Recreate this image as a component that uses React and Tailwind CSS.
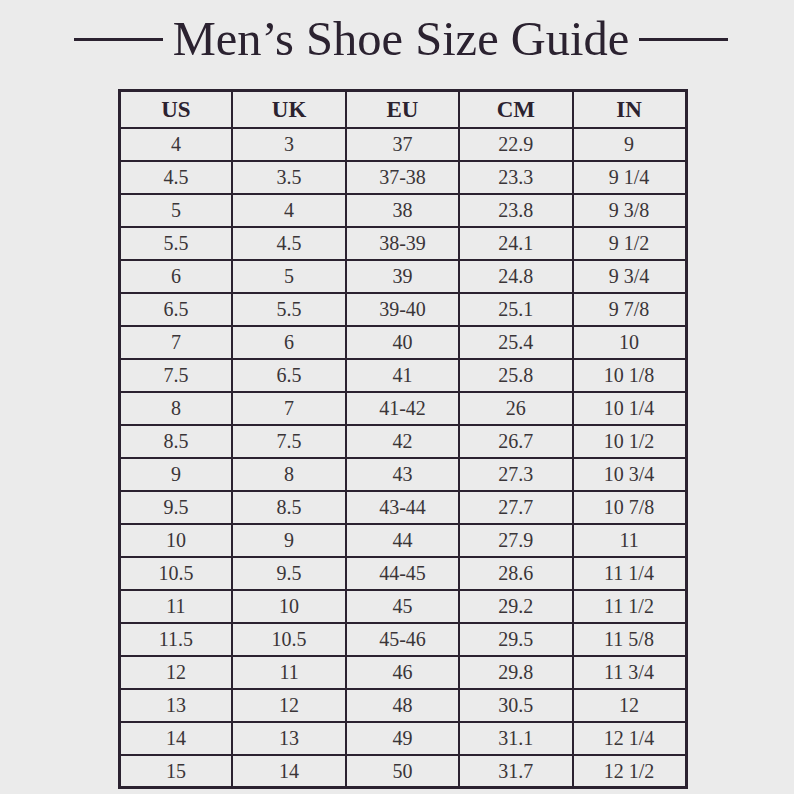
const rows = [
  ["4", "3", "37", "22.9", "9"],
  ["4.5", "3.5", "37-38", "23.3", "9 1/4"],
  ["5", "4", "38", "23.8", "9 3/8"],
  ["5.5", "4.5", "38-39", "24.1", "9 1/2"],
  ["6", "5", "39", "24.8", "9 3/4"],
  ["6.5", "5.5", "39-40", "25.1", "9 7/8"],
  ["7", "6", "40", "25.4", "10"],
  ["7.5", "6.5", "41", "25.8", "10 1/8"],
  ["8", "7", "41-42", "26", "10 1/4"],
  ["8.5", "7.5", "42", "26.7", "10 1/2"],
  ["9", "8", "43", "27.3", "10 3/4"],
  ["9.5", "8.5", "43-44", "27.7", "10 7/8"],
  ["10", "9", "44", "27.9", "11"],
  ["10.5", "9.5", "44-45", "28.6", "11 1/4"],
  ["11", "10", "45", "29.2", "11 1/2"],
  ["11.5", "10.5", "45-46", "29.5", "11 5/8"],
  ["12", "11", "46", "29.8", "11 3/4"],
  ["13", "12", "48", "30.5", "12"],
  ["14", "13", "49", "31.1", "12 1/4"],
  ["15", "14", "50", "31.7", "12 1/2"],
];

const headers = ["US", "UK", "EU", "CM", "IN"];

export default function App() {
  return (
    <div className="w-[794px] h-[794px] bg-[#ebebeb] [font-family:'Liberation_Serif','Times_New_Roman',serif] overflow-hidden">
      {/* title with rules either side */}
      <div className="flex items-center justify-center gap-[10px] pt-[6px] pl-[8px] h-[72px]">
        <div className="w-[89px] h-[3px] bg-[#2b2230]" />
        <h1 className="text-[48.5px] leading-none text-[#2b2230]">Men’s Shoe Size Guide</h1>
        <div className="w-[89px] h-[3px] bg-[#2b2230]" />
      </div>
      <div className="flex justify-center mt-[17px] pl-[11px]">
        <table className="w-[570px] table-fixed border-collapse border-[3px] border-[#2b2230] text-[#3a3538]">
          <thead>
            <tr className="h-[37px]">
              {headers.map((h) => (
                <th
                  key={h}
                  className="border-2 border-[#2b2230] text-[23px] font-bold text-[#2b2230] leading-none p-0 text-center"
                >
                  {h}
                </th>
              ))}
            </tr>
          </thead>
          <tbody>
            {rows.map((r, i) => (
              <tr key={i} className="h-[33px]">
                {r.map((c, j) => (
                  <td
                    key={j}
                    className="border-2 border-[#2b2230] text-[20px] leading-none p-0 text-center"
                  >
                    {c}
                  </td>
                ))}
              </tr>
            ))}
          </tbody>
        </table>
      </div>
    </div>
  );
}
